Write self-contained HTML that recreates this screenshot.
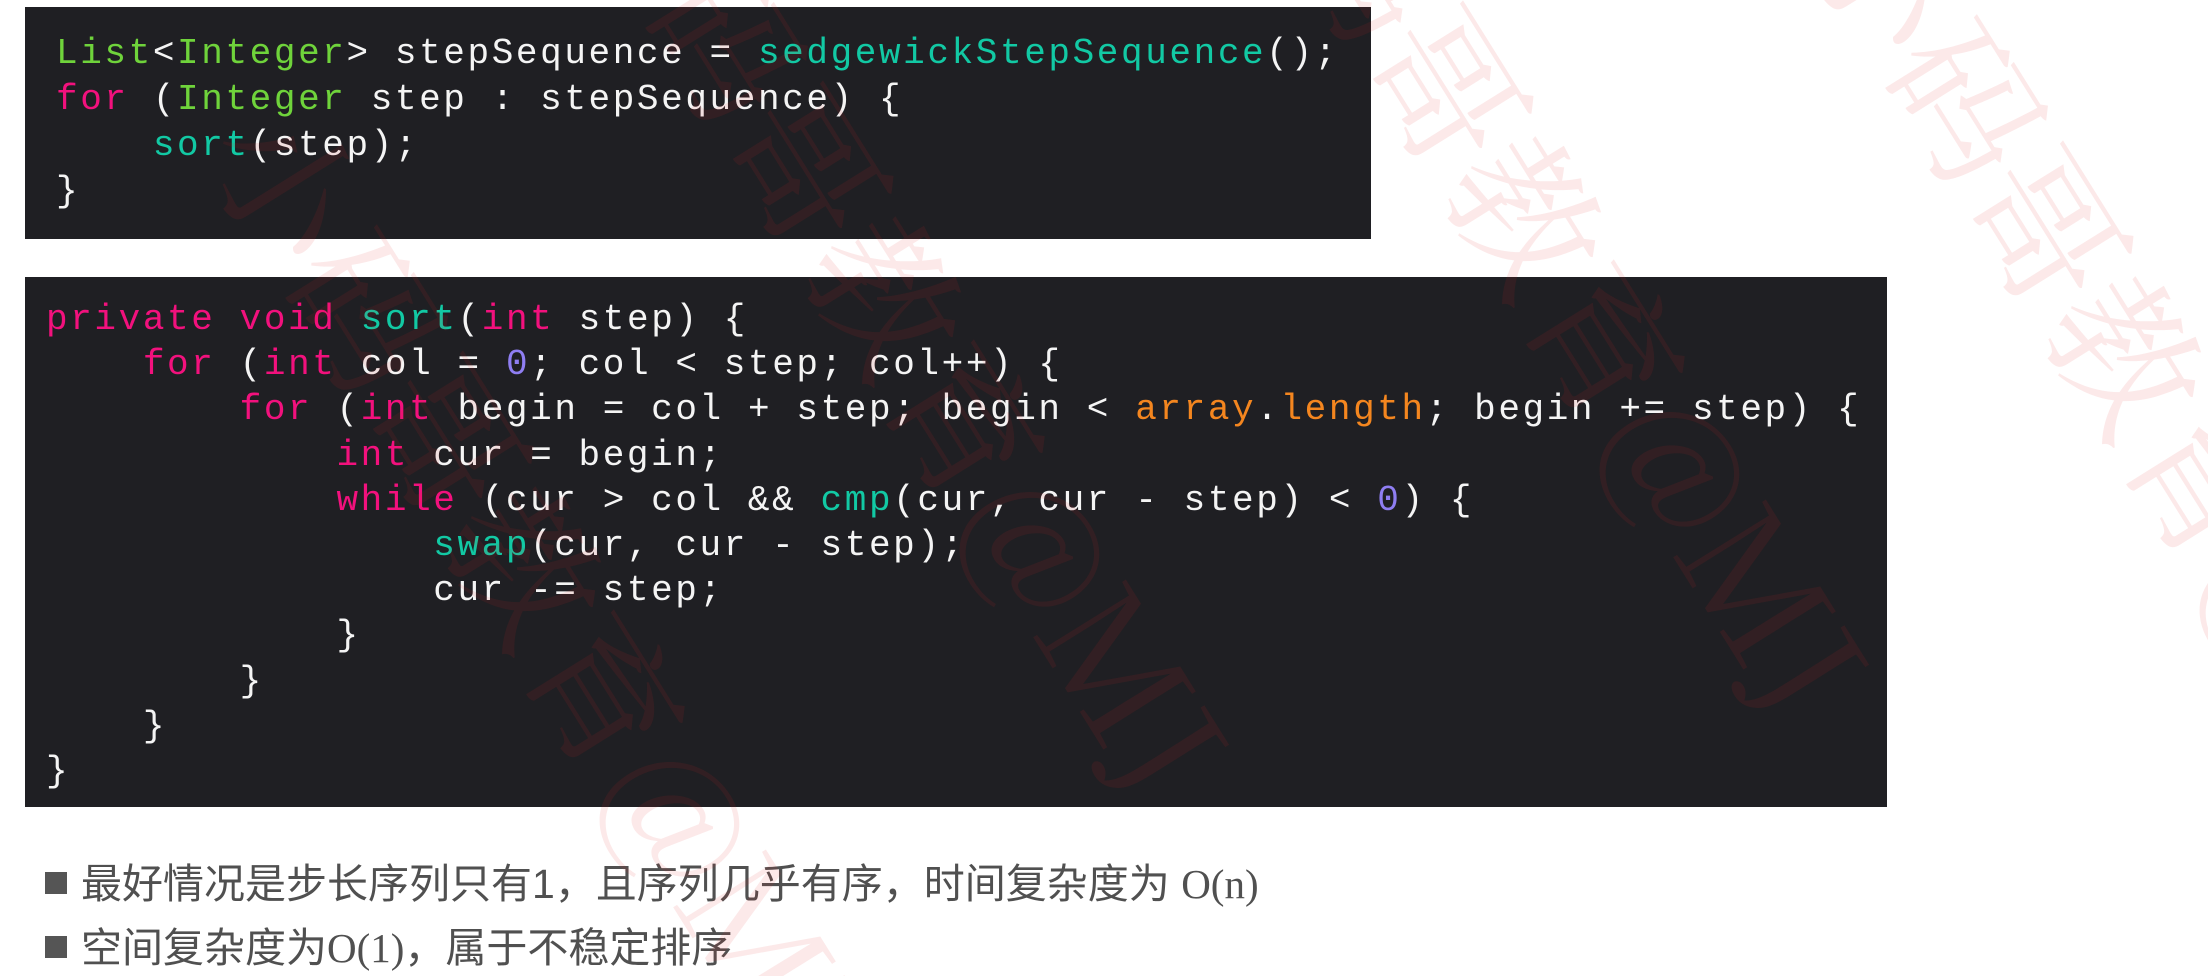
<!DOCTYPE html>
<html><head><meta charset="utf-8"><style>
html,body{margin:0;padding:0;background:#fff;width:2208px;height:976px;overflow:hidden}
#w{position:relative;width:2208px;height:976px;overflow:hidden}
.box{position:absolute;background:#1f1f23}
pre{margin:0;font-family:"Liberation Mono","DejaVu Sans Mono",monospace;font-size:36px;letter-spacing:2.6px;line-height:46px;color:#f4f4f4;position:absolute}
.k{color:#f2117d}.t{color:#6fd33b}.f{color:#12c9a4}.o{color:#f4861f}.n{color:#8f7ef2}
.b{position:absolute;left:45px;font-family:"Liberation Sans","Noto Sans CJK SC",sans-serif;font-size:41px;color:#505050;white-space:nowrap;line-height:50px}
.b i{display:inline-block;width:22px;height:22px;background:#555;margin-right:14px;vertical-align:4px;font-style:normal}
.s{font-family:"Liberation Serif",serif}
svg{position:absolute;left:0;top:0}
</style></head><body><div id="w">
<div class="box" style="left:25px;top:7px;width:1346px;height:232px"></div>
<pre style="left:56px;top:31px"><span class="t">List</span>&lt;<span class="t">Integer</span>&gt; stepSequence = <span class="f">sedgewickStepSequence</span>();
<span class="k">for</span> (<span class="t">Integer</span> step : stepSequence) {
    <span class="f">sort</span>(step);
}</pre>
<div class="box" style="left:25px;top:277px;width:1862px;height:530px"></div>
<pre style="left:46px;top:297px;line-height:45.2px"><span class="k">private</span> <span class="k">void</span> <span class="f">sort</span>(<span class="k">int</span> step) {
    <span class="k">for</span> (<span class="k">int</span> col = <span class="n">0</span>; col &lt; step; col++) {
        <span class="k">for</span> (<span class="k">int</span> begin = col + step; begin &lt; <span class="o">array</span>.<span class="o">length</span>; begin += step) {
            <span class="k">int</span> cur = begin;
            <span class="k">while</span> (cur &gt; col &amp;&amp; <span class="f">cmp</span>(cur, cur - step) &lt; <span class="n">0</span>) {
                <span class="f">swap</span>(cur, cur - step);
                cur -= step;
            }
        }
    }
}</pre>
<div class="b" style="top:859px"><i></i>最好情况是步长序列只有1，且序列几乎有序，时间复杂度为 <span class="s">O(n)</span></div>
<div class="b" style="top:923px"><i></i>空间复杂度为<span class="s">O(1)</span>，属于不稳定排序</div>
<svg width="2208" height="976" viewBox="0 0 2208 976" style="pointer-events:none">
<g font-family="Noto Serif CJK SC, serif" font-size="150" fill="rgba(230,40,40,0.10)">
<text transform="translate(560,-120) rotate(58)">小码哥教育@MJ</text>
<text transform="translate(1200,-200) rotate(58)">小码哥教育@MJ</text>
<text transform="translate(200,150) rotate(58)">小码哥教育@MJ</text>
<text transform="translate(1800,-60) rotate(58)">小码哥教育@MJ</text>
</g></svg>
</div></body></html>
